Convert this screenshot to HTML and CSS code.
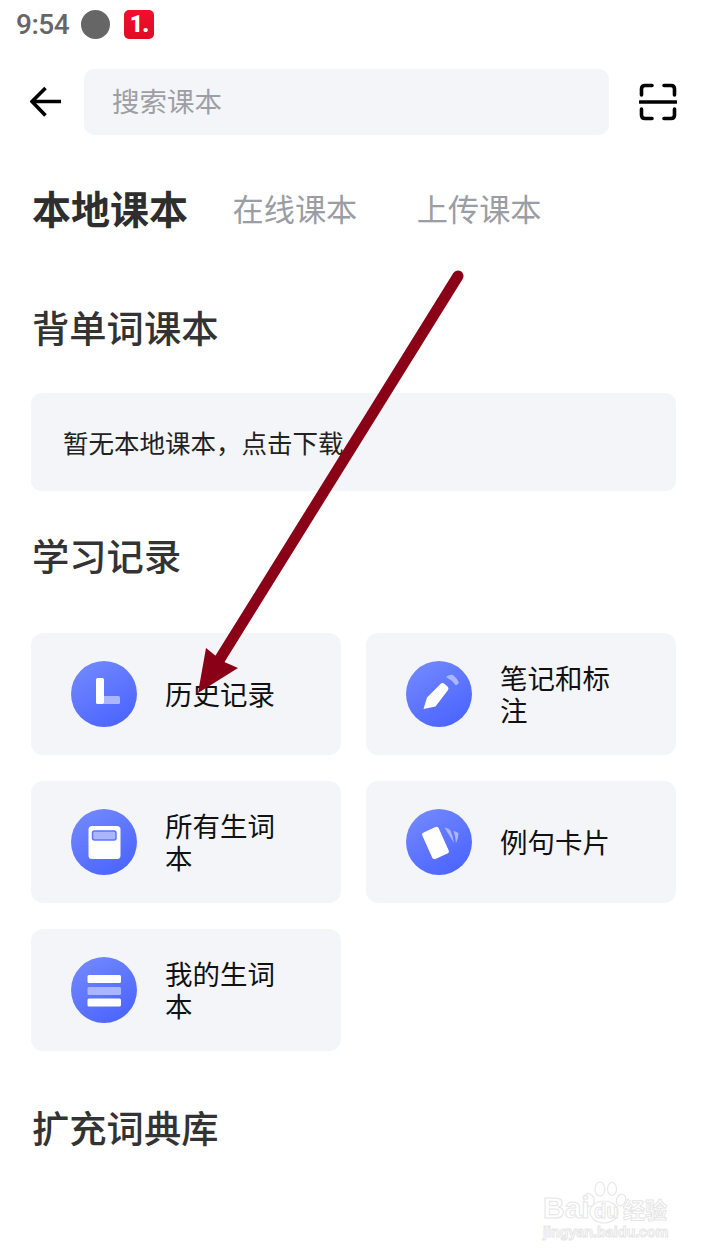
FILE: index.html
```html
<!DOCTYPE html>
<html lang="zh-CN">
<head>
    <meta charset="UTF-8">
    <meta name="viewport" content="width=device-width, initial-scale=1.0">
    <title>本地课本</title>
    <link rel="stylesheet" href="styles.css">
</head>
<body>

<div class="status-bar">
    <span class="status-time">9:54</span>
    <span class="status-dot"></span>
    <span class="status-badge">1.</span>
</div>

<div class="search-row">
    <svg class="back-icon" width="32" height="32" viewBox="0 0 32 32">
        <path d="M31 15.500H2M15.500 2L2 15.500L15.500 29.500" fill="none" stroke="#000" stroke-width="3.600"/>
    </svg>
    <div class="search-box">搜索课本</div>
    <svg class="scan-icon" width="38" height="38" viewBox="0 0 38 38">
        <path d="M2.500 12V6Q2.500 2.500 6 2.500H13M25 2.500H32Q35.500 2.500 35.500 6V12M2.500 26V32Q2.500 35.500 6 35.500H13M25 35.500H32Q35.500 35.500 35.500 32V26" fill="none" stroke="#000" stroke-width="3.600" stroke-linecap="round"/>
        <path d="M1 19H37" stroke="#000" stroke-width="3.600" stroke-linecap="round"/>
    </svg>
</div>

<div class="tabs">
    <span class="tab active">本地课本</span>
    <span class="tab">在线课本</span>
    <span class="tab">上传课本</span>
</div>

<h2 class="section-title first">背单词课本</h2>
<div class="empty-box">暂无本地课本，点击下载</div>

<h2 class="section-title record">学习记录</h2>
<div class="record-grid">
    <div class="record-card">
        <svg class="card-icon" width="66" height="66" viewBox="0 0 66 66">
            <defs>
                <linearGradient id="iconBg" x1="0.200" y1="0" x2="0.800" y2="1">
                    <stop offset="0" stop-color="#7288ff"/>
                    <stop offset="1" stop-color="#4a63ff"/>
                </linearGradient>
            </defs>
            <circle cx="33" cy="33" r="33" fill="url(#iconBg)"/>
            <path d="M33 35H47.500Q49 35 49 36.500V41.500Q49 43 47.500 43H33Z" fill="#aab6ff"/>
            <rect x="25" y="17" width="8" height="26" rx="1.500" fill="#fff"/>
        </svg>
        <span class="card-label">历史记录</span>
    </div>
    <div class="record-card">
        <svg class="card-icon" width="66" height="66" viewBox="0 0 66 66">
            <circle cx="33" cy="33" r="33" fill="url(#iconBg)"/>
            <path d="M40 16Q44 13 47 14Q51 17 53 22L50 24.500Q46 19 40 16Z" fill="#aab6ff"/>
            <path d="M17.500 48L21 36.500L35 22.500Q36.500 21.500 38 22.500L42 26Q43 27.500 42 29L29.500 45.500Z" fill="#fff"/>
        </svg>
        <span class="card-label">笔记和标注</span>
    </div>
    <div class="record-card">
        <svg class="card-icon" width="66" height="66" viewBox="0 0 66 66">
            <circle cx="33" cy="33" r="33" fill="url(#iconBg)"/>
            <rect x="17.500" y="17" width="32" height="33" rx="3.500" fill="#fff"/>
            <rect x="21.500" y="22" width="23.500" height="9" rx="2" fill="#aab6ff" stroke="#5d74ff" stroke-width="1.500"/>
        </svg>
        <span class="card-label">所有生词本</span>
    </div>
    <div class="record-card">
        <svg class="card-icon" width="66" height="66" viewBox="0 0 66 66">
            <circle cx="33" cy="33" r="33" fill="url(#iconBg)"/>
            <path d="M38.500 18.500Q42 19 44.500 21.500Q47 27 48 34Z" fill="#aab6ff"/>
            <path d="M47.500 22Q50 22.500 52.500 24Q52.500 29 50 34Q49.500 28 47.500 22Z" fill="#aab6ff"/>
            <rect x="20.500" y="19.500" width="18" height="29" rx="2.500" transform="rotate(-24 29.500 34)" fill="#fff"/>
        </svg>
        <span class="card-label">例句卡片</span>
    </div>
    <div class="record-card">
        <svg class="card-icon" width="66" height="66" viewBox="0 0 66 66">
            <circle cx="33" cy="33" r="33" fill="url(#iconBg)"/>
            <rect x="16.500" y="18" width="33.500" height="8" rx="1.500" fill="#fff"/>
            <rect x="16.500" y="30" width="33.500" height="8" rx="1.500" fill="#aab6ff"/>
            <rect x="16.500" y="41.500" width="33.500" height="8" rx="1.500" fill="#fff"/>
        </svg>
        <span class="card-label">我的生词本</span>
    </div>
</div>

<h2 class="section-title more">扩充词典库</h2>

<!-- red annotation arrow drawn over the page -->
<svg class="mark-arrow" width="707" height="1256" viewBox="0 0 707 1256">
    <path d="M458 276L218 662" stroke="#8a0016" stroke-width="11" stroke-linecap="round"/>
    <path d="M198 693L206 648L222 661L238 668Z" fill="#8a0016"/>
</svg>

<div class="watermark">
    <svg class="paw" width="46" height="46" viewBox="0 0 46 46">
        <g fill="#fff" stroke="#e8e8e8" stroke-width="1.200">
            <ellipse cx="8" cy="20" rx="5" ry="6.500" transform="rotate(-20 8 20)"/>
            <ellipse cx="19" cy="9" rx="5" ry="7"/>
            <ellipse cx="31" cy="9" rx="4.500" ry="6.500"/>
            <ellipse cx="40" cy="20" rx="4.500" ry="6" transform="rotate(20 40 20)"/>
            <ellipse cx="23" cy="32" rx="14" ry="11"/>
        </g>
    </svg>
    <div class="wm-top">
        <span class="wm-bai">Bai</span>
        <span class="wm-du">du</span>
        <span class="wm-jy">经验</span>
    </div>
    <div class="wm-url">jingyan.baidu.com</div>
</div>

</body>
</html>
```
FILE: styles.css
```css
html, body {
    margin: 0;
    padding: 0;
}

body {
    width: 707px;
    height: 1256px;
    overflow: hidden;
    position: relative;
    background-color: #fff;
    font-family: "Noto Sans CJK SC", "Noto Sans", sans-serif;
}

/* status bar */
.status-bar {
    height: 50px;
    display: flex;
    align-items: center;
    padding-left: 16px;
    box-sizing: border-box;
    padding-bottom: 1px;
}

.status-time {
    font-family: Roboto, sans-serif;
    font-size: 28px;
    font-weight: 500;
    letter-spacing: -0.500px;
    color: #666;
    width: 65px;
}

.status-dot {
    width: 29px;
    height: 29px;
    border-radius: 50%;
    background-color: #666;
}

.status-badge {
    width: 30px;
    height: 29px;
    margin-left: 14px;
    border-radius: 5px;
    background: linear-gradient(#f0102c, #e00a24);
    color: #fff;
    font-family: Roboto, sans-serif;
    font-weight: 900;
    font-size: 23px;
    line-height: 29px;
    letter-spacing: -1px;
    text-align: center;
}

/* search */
.search-row {
    display: flex;
    align-items: center;
    height: 66px;
    margin-top: 19px;
    padding-left: 30px;
}

.back-icon {
    flex: none;
    margin-right: 22px;
}

.search-box {
    width: 497px;
    height: 66px;
    padding-left: 28px;
    border-radius: 10px;
    background-color: #f4f5f8;
    color: #9d9fa5;
    font-size: 27.500px;
    line-height: 63px;
}

.scan-icon {
    flex: none;
    margin-left: 30px;
}

/* tabs */
.tabs {
    display: flex;
    align-items: center;
    height: 50px;
    margin-top: 47px;
    padding-left: 32px;
}

.tab {
    font-size: 31.200px;
    color: #9a9da3;
    margin-right: 59.500px;
}

.tab.active {
    font-size: 39px;
    font-weight: 700;
    color: #2e2e2e;
    margin-right: 44.500px;
}

/* sections */
.section-title {
    margin: 0;
    padding-left: 32px;
    height: 50px;
    font-size: 37.300px;
    font-weight: 500;
    line-height: 50px;
    color: #333;
}

.section-title.first {
    margin-top: 70px;
}

.section-title.record {
    margin-top: 39px;
}

.section-title.more {
    margin-top: 51px;
}

.empty-box {
    width: 613px;
    height: 98px;
    margin: 41px 0 0 31px;
    padding-left: 32px;
    border-radius: 10px;
    background-color: #f4f5f8;
    color: #222;
    font-size: 25.500px;
    line-height: 97px;
}

.record-grid {
    display: grid;
    grid-template-columns: 310px 310px;
    grid-auto-rows: 122px;
    gap: 26px 25px;
    margin: 53px 0 0 31px;
}

.record-card {
    display: flex;
    align-items: center;
    padding: 0 50px 0 40px;
    border-radius: 12px;
    background-color: #f4f5f8;
}

.card-icon {
    flex: none;
    margin-right: 28px;
}

.card-label {
    padding-bottom: 3px;
    font-size: 27.500px;
    line-height: 32px;
    color: #111;
}

/* overlays */
.mark-arrow {
    position: absolute;
    left: 0;
    top: 0;
}

.watermark {
    position: absolute;
    left: 543px;
    top: 1180px;
    width: 126px;
    height: 62px;
    color: #fff;
    -webkit-text-stroke: 1px #e6e6e6;
}

.paw {
    position: absolute;
    left: 38px;
    top: 0;
}

.wm-top {
    position: absolute;
    left: 0;
    top: 12px;
    width: 126px;
    height: 32px;
}

.wm-bai {
    position: absolute;
    left: 0;
    top: 0;
    font-family: "Liberation Sans", sans-serif;
    font-size: 30px;
    font-weight: 700;
    line-height: 32px;
}

.wm-du {
    position: absolute;
    left: 51px;
    top: 7px;
    font-family: "Liberation Sans", sans-serif;
    font-size: 20px;
    font-weight: 700;
    line-height: 24px;
}

.wm-jy {
    position: absolute;
    left: 80px;
    top: 2px;
    font-size: 22px;
    font-weight: 700;
    line-height: 28px;
}

.wm-url {
    position: absolute;
    left: 0;
    top: 42px;
    font-family: "Liberation Sans", sans-serif;
    font-size: 14.300px;
    font-weight: 700;
    line-height: 20px;
    white-space: nowrap;
}
```
